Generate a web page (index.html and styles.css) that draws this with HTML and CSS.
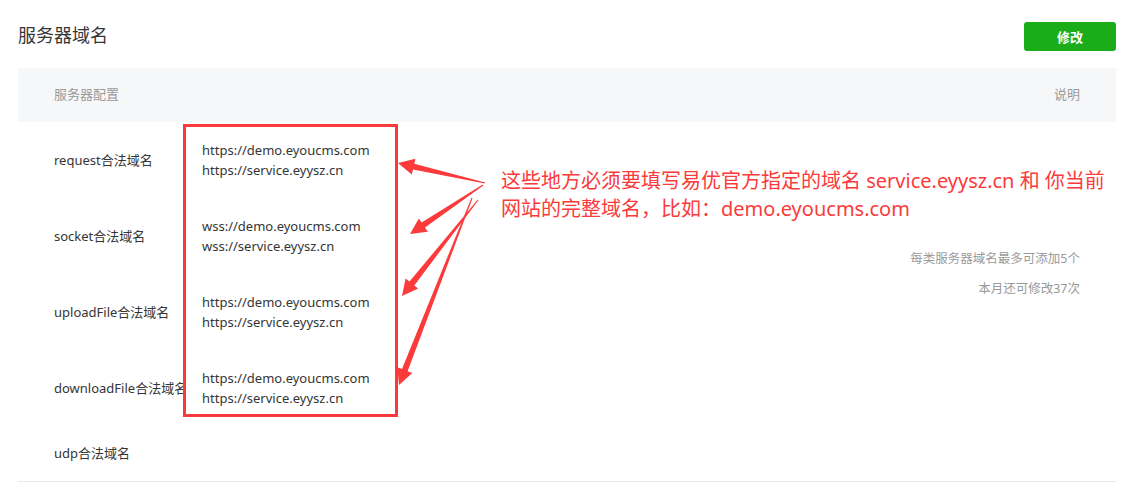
FILE: index.html
```html
<!DOCTYPE html>
<html lang="zh-CN">
<head>
<meta charset="utf-8">
<title>服务器域名</title>
<link rel="stylesheet" href="styles.css">
</head>
<body>
<div class="page">
  <div class="head">
    <h2 class="title">服务器域名</h2>
    <button class="btn">修改</button>
  </div>
  <div class="thead">
    <span>服务器配置</span>
    <span>说明</span>
  </div>
  <div class="tbody">
    <div class="label r1">request合法域名</div>
    <div class="val r1"><div>https://demo.eyoucms.com</div><div>https://service.eyysz.cn</div></div>
    <div class="label r2">socket合法域名</div>
    <div class="val r2"><div>wss://demo.eyoucms.com</div><div>wss://service.eyysz.cn</div></div>
    <div class="label r3">uploadFile合法域名</div>
    <div class="val r3"><div>https://demo.eyoucms.com</div><div>https://service.eyysz.cn</div></div>
    <div class="label r4">downloadFile合法域名</div>
    <div class="val r4"><div>https://demo.eyoucms.com</div><div>https://service.eyysz.cn</div></div>
    <div class="label r5">udp合法域名</div>
    <div class="val r5"></div>
    <div class="notes">
      <p>每类服务器域名最多可添加5个</p>
      <p>本月还可修改37次</p>
    </div>
  </div>

  <div class="redbox"></div>
  <div class="annot">这些地方必须要填写易优官方指定的域名 service.eyysz.cn 和 你当前<br>网站的完整域名，比如：demo.eyoucms.com</div>
  <svg class="arrows" width="1133" height="488" viewBox="0 0 1133 488">
    <g fill="#fb3b3b">
      <polygon points="485.1,182.5 414.3,163.7 415.4,158.8 398,163 411.8,174.4 412.9,169.5 484.9,183.5"/>
      <polygon points="482.7,184.6 421.6,222.6 418.8,218.5 410,234 427.8,231.7 425.0,227.6 483.3,185.4"/>
      <polygon points="477.6,199.7 409.5,281.6 405.6,278.5 402,296 418.2,288.5 414.3,285.4 478.4,200.3"/>
      <polygon points="471.5,197.8 402.0,369.0 397.3,367.2 399,385 412.3,373.0 407.6,371.2 472.5,198.2"/>
    </g>
  </svg>
</div>
</body>
</html>
```
FILE: styles.css
```css
html, body {
  margin: 0;
  padding: 0;
  background: #fff;
}
body {
  font-family: "Noto Sans", "Noto Sans CJK SC", sans-serif;
  color: #353535;
  font-size: 13px;
}
.page {
  position: relative;
  width: 1133px;
  height: 488px;
  padding: 0 17px 0 18px;
  box-sizing: border-box;
  overflow: hidden;
}
.head {
  display: flex;
  justify-content: space-between;
  align-items: center;
  padding-top: 22px;
  margin-bottom: 17px;
}
.title {
  margin: 0;
  font-size: 18px;
  font-weight: normal;
  color: #353535;
  line-height: 24px;
  padding-bottom: 3px;
}
.btn {
  width: 92px;
  height: 29px;
  border: 0;
  border-radius: 3px;
  background: #1aad19;
  color: #fff;
  font-family: "Noto Sans CJK SC", sans-serif;
  font-size: 13px;
  font-weight: bold;
  padding: 0;
}
.thead {
  height: 54px;
  background: #f6f7f9;
  display: flex;
  justify-content: space-between;
  align-items: center;
  padding: 0 36px 2px;
  box-sizing: border-box;
  color: #9a9a9a;
  font-size: 13px;
  line-height: 20px;
}
.tbody {
  display: grid;
  grid-template-columns: 148px 1fr auto;
  grid-template-rows: 76px 76px 76px 76px 55px;
  padding: 0 36px;
  border-bottom: 1px solid #e7e7e7;
}
.label {
  grid-column: 1;
  display: flex;
  align-items: center;
  white-space: nowrap;
  line-height: 20px;
  padding-bottom: 1px;
}
.val {
  grid-column: 2;
  display: flex;
  flex-direction: column;
  justify-content: center;
  line-height: 20px;
}
.r1 { grid-row: 1; }
.r2 { grid-row: 2; }
.r3 { grid-row: 3; }
.r4 { grid-row: 4; }
.r5 { grid-row: 5; }
.notes {
  grid-column: 3;
  grid-row: 1 / 6;
  padding-top: 127px;
  text-align: right;
  color: #9a9a9a;
  font-size: 12.5px;
}
.notes p {
  margin: 0 0 10px;
  line-height: 20px;
}
.redbox {
  position: absolute;
  left: 183px;
  top: 124px;
  width: 215px;
  height: 293px;
  box-sizing: border-box;
  border: 3px solid #fb3b3b;
}
.annot {
  position: absolute;
  left: 501px;
  top: 167px;
  font-size: 20px;
  line-height: 28px;
  color: #fb3b3b;
  white-space: nowrap;
}
.arrows {
  position: absolute;
  left: 0;
  top: 0;
  pointer-events: none;
}
```
